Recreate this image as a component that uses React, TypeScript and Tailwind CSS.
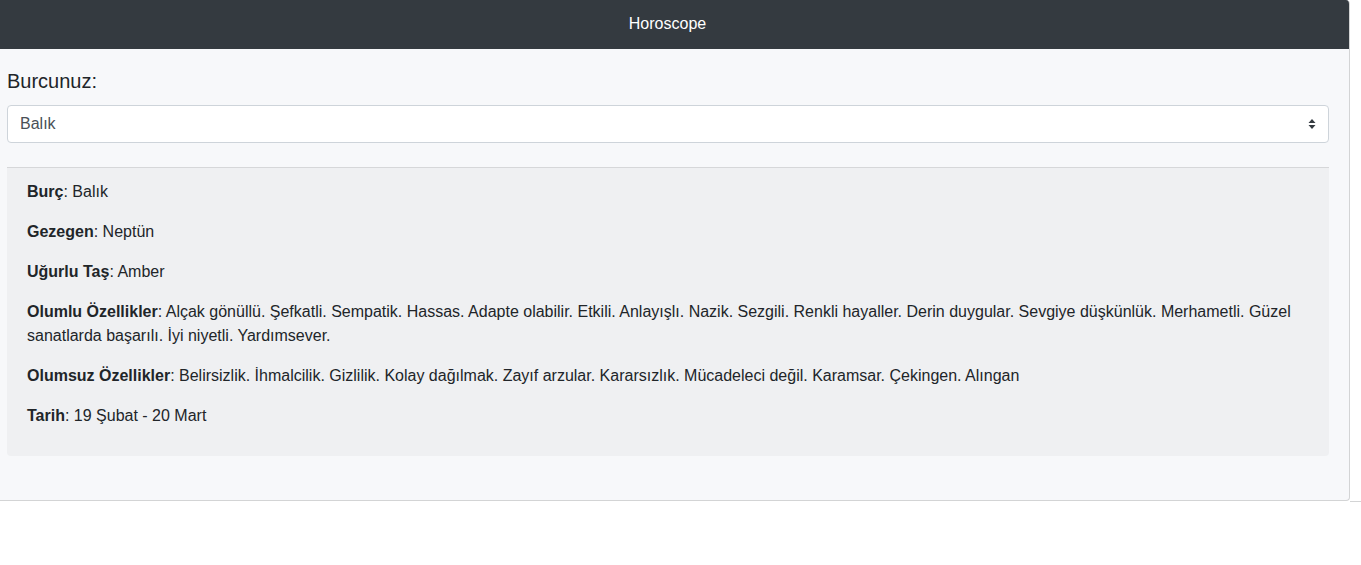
export default function App() {
  const rows: [string, string][] = [
    ["Burç", "Balık"],
    ["Gezegen", "Neptün"],
    ["Uğurlu Taş", "Amber"],
    [
      "Olumlu Özellikler",
      "Alçak gönüllü. Şefkatli. Sempatik. Hassas. Adapte olabilir. Etkili. Anlayışlı. Nazik. Sezgili. Renkli hayaller. Derin duygular. Sevgiye düşkünlük. Merhametli. Güzel sanatlarda başarılı. İyi niyetli. Yardımsever.",
    ],
    [
      "Olumsuz Özellikler",
      "Belirsizlik. İhmalcilik. Gizlilik. Kolay dağılmak. Zayıf arzular. Kararsızlık. Mücadeleci değil. Karamsar. Çekingen. Alıngan",
    ],
    ["Tarih", "19 Şubat - 20 Mart"],
  ];
  return (
    <div className="w-[1361px] h-[565px] bg-white font-['Liberation_Sans',Arial,sans-serif] text-[#212529]">
      <div className="relative w-[1350px]">
        <div className="w-[1350px] rounded-br-[4px] rounded-tr-[4px] border-r border-b border-[#d3d4d5] bg-[#f7f8fa] overflow-hidden">
          <div className="h-[49px] bg-[#343a40] text-white text-[16px] flex items-center justify-center pr-[14px] pb-[1px]">
            Horoscope
          </div>
          <div className="px-[7px] pt-[17px] pb-[44px] w-[1336px]">
            <div className="text-[20px] leading-[30px] mb-[9px]">Burcunuz:</div>
            <div className="h-[38px] bg-white border border-[#ced4da] rounded-[4px] flex items-center justify-between pl-[12px] pr-[12px] text-[16px] text-[#495057]">
              <span>Balık</span>
              <svg width="8" height="12" viewBox="0 0 8 12">
                <path d="M4 1 L7.5 5 L0.5 5 Z" fill="#343a40" />
                <path d="M4 11 L7.5 7 L0.5 7 Z" fill="#343a40" />
              </svg>
            </div>
            <div className="mt-[24px] border-t border-[#d6d7d9] bg-[#eff0f2] px-[20px] pt-[12px] pb-[12px] rounded-b-[4px]">
              {rows.map(([k, v]) => (
                <p key={k} className="text-[16px] leading-[24px] mb-[16px]">
                  <b>{k}</b>: {v}
                </p>
              ))}
            </div>
          </div>
        </div>
        <div className="absolute left-[1350px] top-[501px] w-[11px] h-[1px] bg-[#d3d4d5]" />
      </div>
    </div>
  );
}
